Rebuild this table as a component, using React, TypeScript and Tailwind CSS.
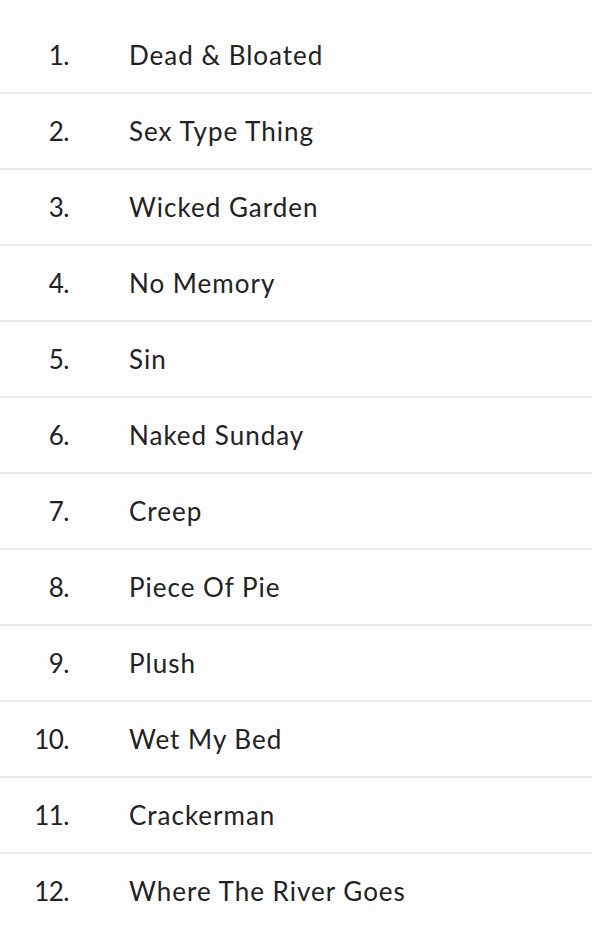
import React from 'react';

const tracks = [
  'Dead & Bloated',
  'Sex Type Thing',
  'Wicked Garden',
  'No Memory',
  'Sin',
  'Naked Sunday',
  'Creep',
  'Piece Of Pie',
  'Plush',
  'Wet My Bed',
  'Crackerman',
  'Where The River Goes',
];

const App = () => {
  return (
    <div className="w-[592px] h-[928px] overflow-hidden bg-[#fdfdfd] pt-[18px] text-[#222222] font-['Lato',sans-serif] text-[26px]">
      {tracks.map((title, i) => (
        <div key={title} className="flex h-[76px] items-center border-b-2 border-[#e9e9e9] pb-px">
          {/* track number, right aligned */}
          <div className="w-[69px] text-right leading-none tracking-[-0.5px]">{i + 1}.</div>
          <div className="pl-[60px] leading-none tracking-[1px]">{title}</div>
        </div>
      ))}
    </div>
  );
};

export default App;
